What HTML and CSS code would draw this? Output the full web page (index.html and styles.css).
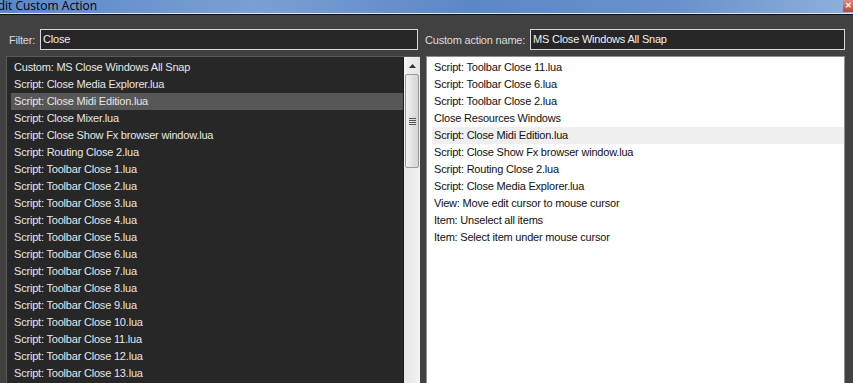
FILE: index.html
```html
<!DOCTYPE html>
<html lang="en">
<head>
    <meta charset="UTF-8">
    <title>Edit Custom Action</title>
    <link rel="stylesheet" href="styles.css">
</head>
<body>
    <!-- Title bar -->
    <div class="titlebar">
        <span class="title">Edit Custom Action</span>
        <span class="close-btn">&#x2715;</span>
    </div>

    <div class="dialog">
        <!-- Top row -->
        <div class="field filter-field">
            <label>Filter:</label>
            <div class="textbox">Close</div>
        </div>
        <div class="field name-field">
            <label>Custom action name:</label>
            <div class="textbox">MS Close Windows All Snap</div>
        </div>

        <!-- Action list -->
        <div class="list dark-list">
            <div class="rows">
                <div class="row">Custom: MS Close Windows All Snap</div>
                <div class="row">Script: Close Media Explorer.lua</div>
                <div class="row selected">Script: Close Midi Edition.lua</div>
                <div class="row">Script: Close Mixer.lua</div>
                <div class="row">Script: Close Show Fx browser window.lua</div>
                <div class="row">Script: Routing Close 2.lua</div>
                <div class="row">Script: Toolbar Close 1.lua</div>
                <div class="row">Script: Toolbar Close 2.lua</div>
                <div class="row">Script: Toolbar Close 3.lua</div>
                <div class="row">Script: Toolbar Close 4.lua</div>
                <div class="row">Script: Toolbar Close 5.lua</div>
                <div class="row">Script: Toolbar Close 6.lua</div>
                <div class="row">Script: Toolbar Close 7.lua</div>
                <div class="row">Script: Toolbar Close 8.lua</div>
                <div class="row">Script: Toolbar Close 9.lua</div>
                <div class="row">Script: Toolbar Close 10.lua</div>
                <div class="row">Script: Toolbar Close 11.lua</div>
                <div class="row">Script: Toolbar Close 12.lua</div>
                <div class="row">Script: Toolbar Close 13.lua</div>
            </div>
            <div class="scrollbar">
                <div class="arrow-up">
                    <svg width="7" height="4" viewBox="0 0 7 4"><path d="M0 4 L3.5 0 L7 4 Z" fill="#333"/></svg>
                </div>
                <div class="thumb">
                    <div class="grip"></div>
                    <div class="grip"></div>
                    <div class="grip"></div>
                    <div class="grip"></div>
                </div>
                <div class="track"></div>
            </div>
        </div>

        <!-- Custom action steps -->
        <div class="list light-list">
            <div class="rows">
                <div class="row">Script: Toolbar Close 11.lua</div>
                <div class="row">Script: Toolbar Close 6.lua</div>
                <div class="row">Script: Toolbar Close 2.lua</div>
                <div class="row">Close Resources Windows</div>
                <div class="row selected">Script: Close Midi Edition.lua</div>
                <div class="row">Script: Close Show Fx browser window.lua</div>
                <div class="row">Script: Routing Close 2.lua</div>
                <div class="row">Script: Close Media Explorer.lua</div>
                <div class="row">View: Move edit cursor to mouse cursor</div>
                <div class="row">Item: Unselect all items</div>
                <div class="row">Item: Select item under mouse cursor</div>
            </div>
        </div>
    </div>
</body>
</html>
```

FILE: styles.css
```css
/* General styling */
body {
    margin: 0;
    padding: 0;
    height: 383px;
    overflow: hidden;
    background-color: #414141;
    font-family: "Liberation Sans", Arial, sans-serif;
    font-size: 11px;
    letter-spacing: -0.2px;
    display: flex;
    flex-direction: column;
}
/* Title bar */
.titlebar {
    height: 13px;
    background: linear-gradient(90deg, #5a88c8 0%, #7a9fd4 30%, #5c87c6 55%, #6a93cc 80%, #8fb0dc 100%);
    border-bottom: 1px solid #dfe6ef;
    box-shadow: 0 1px 0 #111;
    display: flex;
    align-items: center;
    justify-content: space-between;
    overflow: hidden;
}
.title {
    margin-left: -9px;
    color: #000;
    font-family: "Open Sans", "Liberation Sans", sans-serif;
    font-size: 12px;
    letter-spacing: 0;
    line-height: 13px;
    margin-top: -3px;
}
.close-btn {
    width: 10px;
    height: 12px;
    margin-top: -1px;
    background: linear-gradient(#e08a7a, #c0432f);
    color: #fff;
    font-size: 8px;
    font-weight: bold;
    line-height: 12px;
    text-align: center;
}
/* Dialog layout */
.dialog {
    flex: 1;
    display: grid;
    grid-template-columns: 414px 419px;
    grid-template-rows: 21px 1fr;
    column-gap: 6px;
    row-gap: 6px;
    padding: 15px 8px 0 6px;
    min-height: 0;
}
.field {
    display: flex;
    align-items: center;
    color: #dcdcdc;
    white-space: nowrap;
}
.filter-field label {
    margin-left: 3px;
    width: 31px;
}
.filter-field .textbox {
    width: 374px;
}
.name-field label {
    width: 105px;
    margin-left: -1px;
}
.name-field .textbox {
    flex: 1;
}
.textbox {
    height: 19px;
    border: 1px solid #d8d8d8;
    background-color: #262626;
    color: #f0f0f0;
    padding-left: 2px;
    line-height: 19px;
    box-sizing: content-box;
}
/* Lists */
.list {
    display: flex;
    overflow: hidden;
    min-height: 0;
}
.rows {
    flex: 1;
    padding-top: 2px;
}
.row {
    height: 17px;
    line-height: 17px;
    white-space: nowrap;
}
.dark-list {
    background-color: #272727;
    border-left: 1px solid #5a5a5a;
    border-top: 1px solid #5a5a5a;
}
.dark-list .rows {
    padding-left: 4px;
}
.dark-list .row {
    color: #e6e6e6;
    padding-left: 3px;
}
.dark-list .row.selected {
    background-color: #575757;
}
.light-list {
    background-color: #fff;
    border: 1px solid #8c8f94;
    border-bottom: none;
}
.light-list .rows {
    padding-left: 5px;
}
.light-list .row {
    color: #111;
    padding-left: 2px;
}
.light-list .row.selected {
    background-color: #efefef;
}
/* Scrollbar */
.scrollbar {
    width: 16px;
    background-color: #efefef;
    border-left: 1px solid #1e1e1e;
    display: flex;
    flex-direction: column;
}
.arrow-up {
    height: 17px;
    display: flex;
    align-items: center;
    justify-content: center;
    background: linear-gradient(90deg, #f4f4f4, #e4e4e4);
}
.thumb {
    height: 92px;
    margin: 0 1px;
    border: 1px solid #9a9a9a;
    border-radius: 2px;
    background: linear-gradient(90deg, #f2f2f2 0%, #e2e2e2 50%, #d4d4d4 100%);
    display: flex;
    flex-direction: column;
    justify-content: center;
    align-items: center;
    gap: 1px;
}
.grip {
    width: 7px;
    height: 1px;
    background-color: #555;
}
.track {
    flex: 1;
    background: linear-gradient(90deg, #e6e6e6, #f2f2f2);
}
```
